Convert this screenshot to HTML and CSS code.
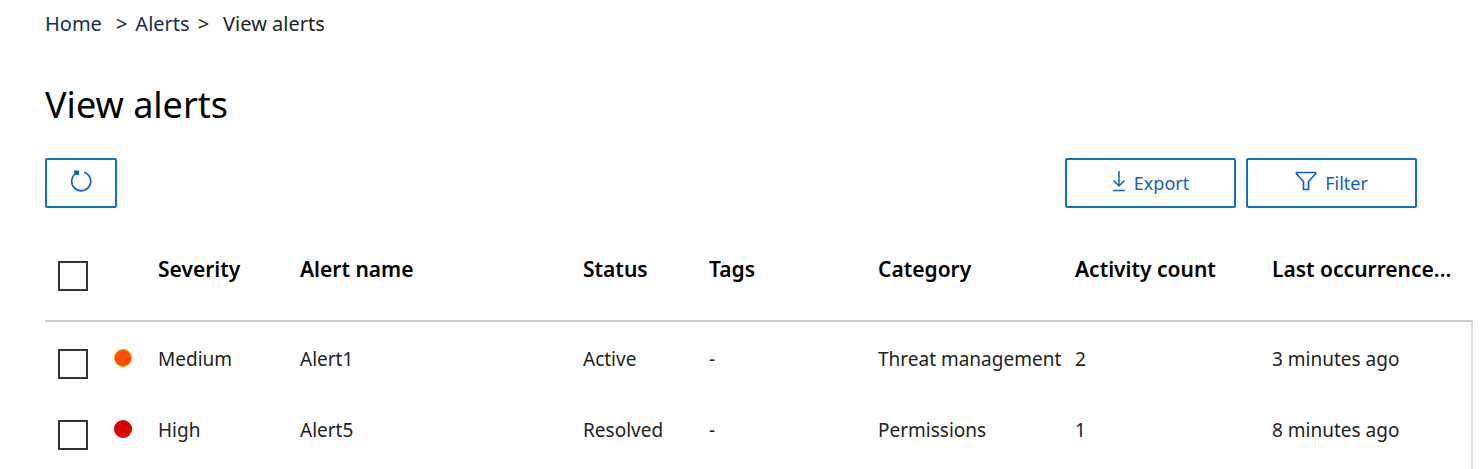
FILE: index.html
```html
<!DOCTYPE html>
<html lang="en">
<head>
  <meta charset="UTF-8">
  <title>View alerts</title>
  <link rel="stylesheet" href="styles.css">
</head>
<body>
  <nav class="breadcrumb" aria-label="Breadcrumb">
    <a href="#">Home</a>
    <span class="sep wide">&gt;</span>
    <a href="#">Alerts</a>
    <span class="sep">&gt;</span>
    <span class="current">View alerts</span>
  </nav>

  <h1>View alerts</h1>

  <div class="toolbar">
    <button type="button" class="btn refresh" aria-label="Refresh">
      <svg width="24" height="24" viewBox="0 0 24 24" fill="none" stroke="currentColor" stroke-width="1.700">
        <path d="M15 3.200A9.500 9.500 0 1 1 7.500 4"/>
        <path d="M5 3H8.500V6" stroke-width="3"/>
      </svg>
    </button>
    <button type="button" class="btn export">
      <svg width="14" height="22" viewBox="0 0 14 22" fill="none" stroke="currentColor" stroke-width="1.500">
        <path d="M7 1v15M1.500 10.500L7 16l5.500-5.500M1 20.500h12"/>
      </svg>
      Export
    </button>
    <button type="button" class="btn">
      <svg width="22" height="20" viewBox="0 0 22 20" fill="none" stroke="currentColor" stroke-width="1.700">
        <path d="M1.500 1.500h19v1.500L13.500 10.500V18.500h-5V10.500L1.500 3z"/>
      </svg>
      Filter
    </button>
  </div>

  <table class="alerts">
    <colgroup>
      <col class="col-check">
      <col class="col-dot">
      <col class="col-severity">
      <col class="col-name">
      <col class="col-status">
      <col class="col-tags">
      <col class="col-category">
      <col class="col-count">
      <col class="col-last">
    </colgroup>
    <thead>
      <tr>
        <th class="check"><input type="checkbox" aria-label="Select all alerts"></th>
        <th></th>
        <th>Severity</th>
        <th>Alert name</th>
        <th>Status</th>
        <th>Tags</th>
        <th>Category</th>
        <th>Activity count</th>
        <th>Last occurrence...</th>
      </tr>
    </thead>
    <tbody>
      <tr>
        <td class="check"><input type="checkbox" aria-label="Select Alert1"></td>
        <td class="level"><span class="dot medium"></span></td>
        <td>Medium</td>
        <td>Alert1</td>
        <td>Active</td>
        <td>-</td>
        <td>Threat management</td>
        <td>2</td>
        <td>3 minutes ago</td>
      </tr>
      <tr>
        <td class="check"><input type="checkbox" aria-label="Select Alert5"></td>
        <td class="level"><span class="dot high"></span></td>
        <td>High</td>
        <td>Alert5</td>
        <td>Resolved</td>
        <td>-</td>
        <td>Permissions</td>
        <td>1</td>
        <td>8 minutes ago</td>
      </tr>
    </tbody>
  </table>
</body>
</html>
```
FILE: styles.css
```css
* {
  box-sizing: border-box;
}

body {
  margin: 0;
  padding: 12px 11px 0 45px;
  font-family: "Noto Sans", "Open Sans", sans-serif;
  font-size: 19px;
  line-height: 24px;
  color: #222;
  background: #fff;
}

.breadcrumb {
  display: flex;
  font-size: 20px;
  color: #222;
}

.breadcrumb a {
  color: #12304f;
  text-decoration: none;
}

.sep {
  margin: 0 14px 0 8px;
}

.sep.wide {
  margin: 0 8px 0 14px;
}

h1 {
  margin: 45px 0 29px;
  font-size: 36px;
  line-height: 48px;
  font-weight: 400;
  color: #000;
}

.toolbar {
  display: flex;
  gap: 10px;
  padding-right: 56px;
}

.btn {
  display: flex;
  align-items: center;
  justify-content: center;
  gap: 8px;
  width: 171px;
  height: 50px;
  padding: 0;
  border: 2px solid #1570bd;
  border-radius: 2px;
  background: #fff;
  color: #1260c0;
  font: inherit;
  font-size: 18px;
  cursor: pointer;
}

/* icons sit a little above the label */
.btn svg {
  margin-bottom: 5px;
}

.refresh {
  width: 72px;
}

.export {
  margin-left: auto;
}

.alerts {
  width: 100%;
  margin-top: 26px;
  border-collapse: separate;
  border-spacing: 0;
  table-layout: fixed;
}

.col-check { width: 69px; }
.col-dot { width: 44px; }
.col-severity { width: 142px; }
.col-status { width: 126px; }
.col-tags { width: 169px; }
.col-category { width: 197px; }
.col-count { width: 197px; }
.col-last { width: 201px; }

.alerts th,
.alerts td {
  padding: 0;
  text-align: left;
  vertical-align: top;
  white-space: nowrap;
}

.alerts th {
  height: 88px;
  padding-top: 23px;
  border-bottom: 2px solid #ccc;
  font-size: 21px;
  font-weight: 600;
  color: #000;
}

.alerts td {
  height: 71px;
  padding-top: 25px;
}

.alerts td:last-child {
  border-right: 2px solid #ddd;
}

.alerts tr:last-child td {
  height: 76px;
}

.alerts .check {
  padding-top: 27px;
  padding-left: 13px;
}

.alerts .level {
  padding-top: 27px;
}

.check input {
  appearance: none;
  display: block;
  width: 30px;
  height: 30px;
  margin: 0;
  border: 2px solid #333;
  background: #fff;
}

.check input:checked {
  background: #1570bd;
}

.dot {
  display: block;
  width: 18px;
  height: 18px;
  border-radius: 50%;
}

.medium {
  background: #ff4d00;
  border: 1px solid #ffa500;
}

.high {
  background: #dc0000;
}
```
